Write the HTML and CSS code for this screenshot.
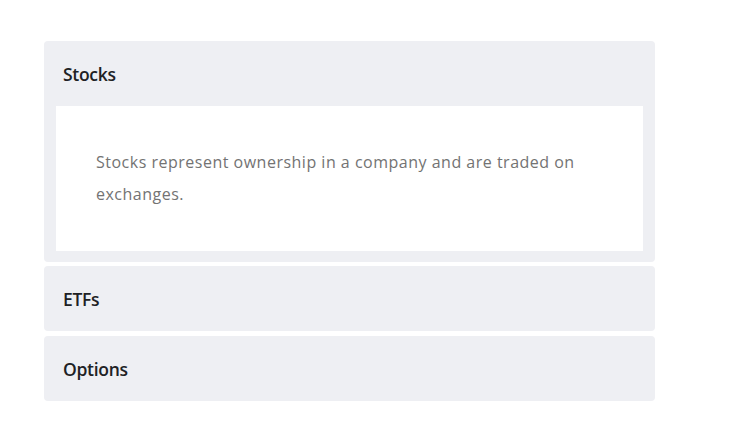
FILE: index.html
```html
<!DOCTYPE html>
<html lang="en">
<head>
<meta charset="utf-8">
<title>Accordion</title>
<link rel="stylesheet" href="styles.css">
</head>
<body>
<div class="accordion">
  <div class="item open">
    <div class="item-header">Stocks</div>
    <div class="item-body">
      <p>Stocks represent ownership in a company and are traded on exchanges.</p>
    </div>
  </div>
  <div class="item">
    <div class="item-header">ETFs</div>
  </div>
  <div class="item">
    <div class="item-header">Options</div>
  </div>
</div>
</body>
</html>
```

FILE: styles.css
```css
html, body {
  margin: 0;
  padding: 0;
  background: #ffffff;
}
body {
  font-family: "Open Sans", "Liberation Sans", sans-serif;
}
.accordion {
  width: 611px;
  padding: 41px 0 0 44px;
  display: flex;
  flex-direction: column;
  gap: 4px;
}
.item {
  background: #eeeff3;
  border-radius: 4px;
}
.item + .item + .item {
  margin-top: 1px;
}
.item-header {
  height: 65px;
  display: flex;
  align-items: center;
  padding: 0 19px;
  font-size: 17.5px;
  font-weight: 600;
  color: #202124;
  letter-spacing: -0.3px;
}
.item-body {
  background: #ffffff;
  margin: 0 12px 11px 12px;
  padding: 40px 40px 41px 40px;
}
.item-body p {
  margin: 0;
  width: 505px;
  font-size: 16px;
  line-height: 32px;
  color: #737373;
  letter-spacing: 0.5px;
}
```
